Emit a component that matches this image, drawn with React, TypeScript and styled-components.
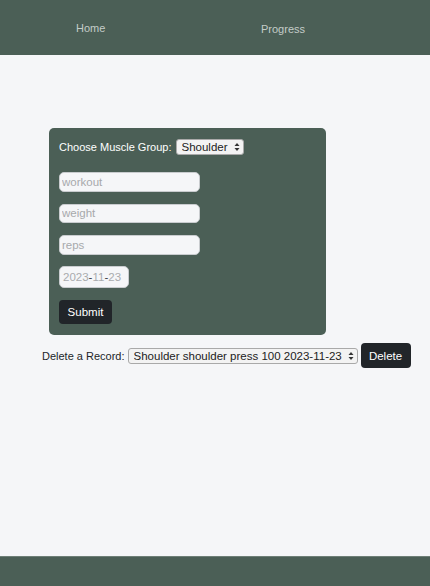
import React from "react";
import styled, { createGlobalStyle } from "styled-components";

const Global = createGlobalStyle`
  html, body { margin: 0; padding: 0; }
  body {
    background: #f5f6f8;
    font-family: "Liberation Sans", Arial, sans-serif;
    color: #212529;
  }
`;

const Page = styled.div`
  min-height: 100vh;
  display: flex;
  flex-direction: column;
`;

const Header = styled.header`
  height: 55px;
  background: #4b5f56;
  display: flex;
  align-items: center;
  padding-left: 76px;
  box-sizing: border-box;
`;

const NavLink = styled.a<{ $offset?: number; $width: number }>`
  width: ${(p) => p.$width}px;
  font-size: 11px;
  color: #c4ccc8;
  text-decoration: none;
  margin-top: ${(p) => p.$offset ?? 0}px;
`;

const Main = styled.main`
  flex: 1;
  padding: 73px 0 0 42px;
`;

const Card = styled.form`
  margin-left: 7px;
  width: 277px;
  height: 207px;
  box-sizing: border-box;
  background: #4b5f56;
  border-radius: 5px;
  padding: 11px 10px;
  display: flex;
  flex-direction: column;
  align-items: flex-start;
`;

const GroupRow = styled.label`
  display: flex;
  align-items: center;
  gap: 4px;
  color: #ffffff;
  font-size: 11px;
  margin-bottom: 17px;
`;

const SelectWrap = styled.div<{ $width: number }>`
  position: relative;
  width: ${(p) => p.$width}px;
  height: 16px;
  display: flex;
`;

const Select = styled.select`
  appearance: none;
  -webkit-appearance: none;
  width: 100%;
  height: 100%;
  box-sizing: border-box;
  border: 1px solid #a9a9a9;
  border-radius: 3px;
  background: #f3f3f3;
  font-family: inherit;
  font-size: 11.5px;
  color: #222;
  padding: 0 14px 0 5px;
  line-height: 14px;
  outline: none;
`;

const Arrows = styled.svg`
  position: absolute;
  right: 4px;
  top: 3px;
  pointer-events: none;
`;

const Field = styled.input`
  width: 141px;
  height: 20px;
  box-sizing: border-box;
  border: 1px solid #c9cccf;
  border-radius: 5px;
  background: #f5f6f8;
  font-family: inherit;
  font-size: 11.5px;
  padding: 0 2px;
  margin-bottom: 12px;
  outline: none;
  &::placeholder { color: #a7a9ac; }
`;

const DateField = styled.div`
  width: 70px;
  height: 22px;
  box-sizing: border-box;
  border: 1px solid #c9cccf;
  border-radius: 5px;
  background: #f5f6f8;
  font-size: 11.5px;
  display: flex;
  align-items: center;
  padding-left: 3px;
  margin-top: -1px;
  margin-bottom: 12px;
`;

const DatePart = styled.span<{ $dim?: boolean }>`
  color: ${(p) => (p.$dim ? "#a9abae" : "#3a3d40")};
`;

const DarkButton = styled.button<{ $w: number; $h: number; $ml?: number }>`
  width: ${(p) => p.$w}px;
  height: ${(p) => p.$h}px;
  margin-left: ${(p) => p.$ml ?? 0}px;
  background: #212529;
  color: #ffffff;
  border: none;
  border-radius: 4px;
  font-family: inherit;
  font-size: 11.5px;
  padding: 0;
  cursor: pointer;
`;

const DeleteRow = styled.div`
  display: flex;
  align-items: center;
  margin-top: 8px;
  font-size: 11px;
  color: #212529;
`;

const DeleteLabel = styled.label`
  margin-right: 3px;
`;

const Footer = styled.footer`
  height: 29px;
  background: #4b5f56;
  border-top: 1px solid #6e7f77;
`;

const ArrowIcon = () => (
  <Arrows width="6" height="10" viewBox="0 0 6 10">
    <path d="M0.5 4 L3 1 L5.5 4 Z" fill="#333" />
    <path d="M0.5 6 L3 9 L5.5 6 Z" fill="#333" />
  </Arrows>
);

export default function App() {
  return (
    <Page>
      <Global />
      <Header>
        <NavLink href="#" $width={185} $offset={1}>Home</NavLink>
        <NavLink href="#" $width={60} $offset={3}>Progress</NavLink>
      </Header>
      <Main>
        <Card onSubmit={(e) => e.preventDefault()}>
          <GroupRow>
            Choose Muscle Group:
            <SelectWrap $width={68}>
              <Select defaultValue="Shoulder">
                <option>Shoulder</option>
                <option>Chest</option>
                <option>Back</option>
                <option>Legs</option>
                <option>Arms</option>
              </Select>
              <ArrowIcon />
            </SelectWrap>
          </GroupRow>
          <Field placeholder="workout" />
          <Field placeholder="weight" />
          <Field placeholder="reps" />
          <DateField>
            <DatePart $dim>2023</DatePart>
            <DatePart>-</DatePart>
            <DatePart $dim>11</DatePart>
            <DatePart>-</DatePart>
            <DatePart $dim>23</DatePart>
          </DateField>
          <DarkButton type="submit" $w={53} $h={25}>Submit</DarkButton>
        </Card>
        <DeleteRow>
          <DeleteLabel>Delete a Record:</DeleteLabel>
          <SelectWrap $width={230}>
            <Select defaultValue="a">
              <option value="a">Shoulder shoulder press 100 2023-11-23</option>
            </Select>
            <ArrowIcon />
          </SelectWrap>
          <DarkButton type="button" $w={50} $h={25} $ml={3}>Delete</DarkButton>
        </DeleteRow>
      </Main>
      <Footer />
    </Page>
  );
}
